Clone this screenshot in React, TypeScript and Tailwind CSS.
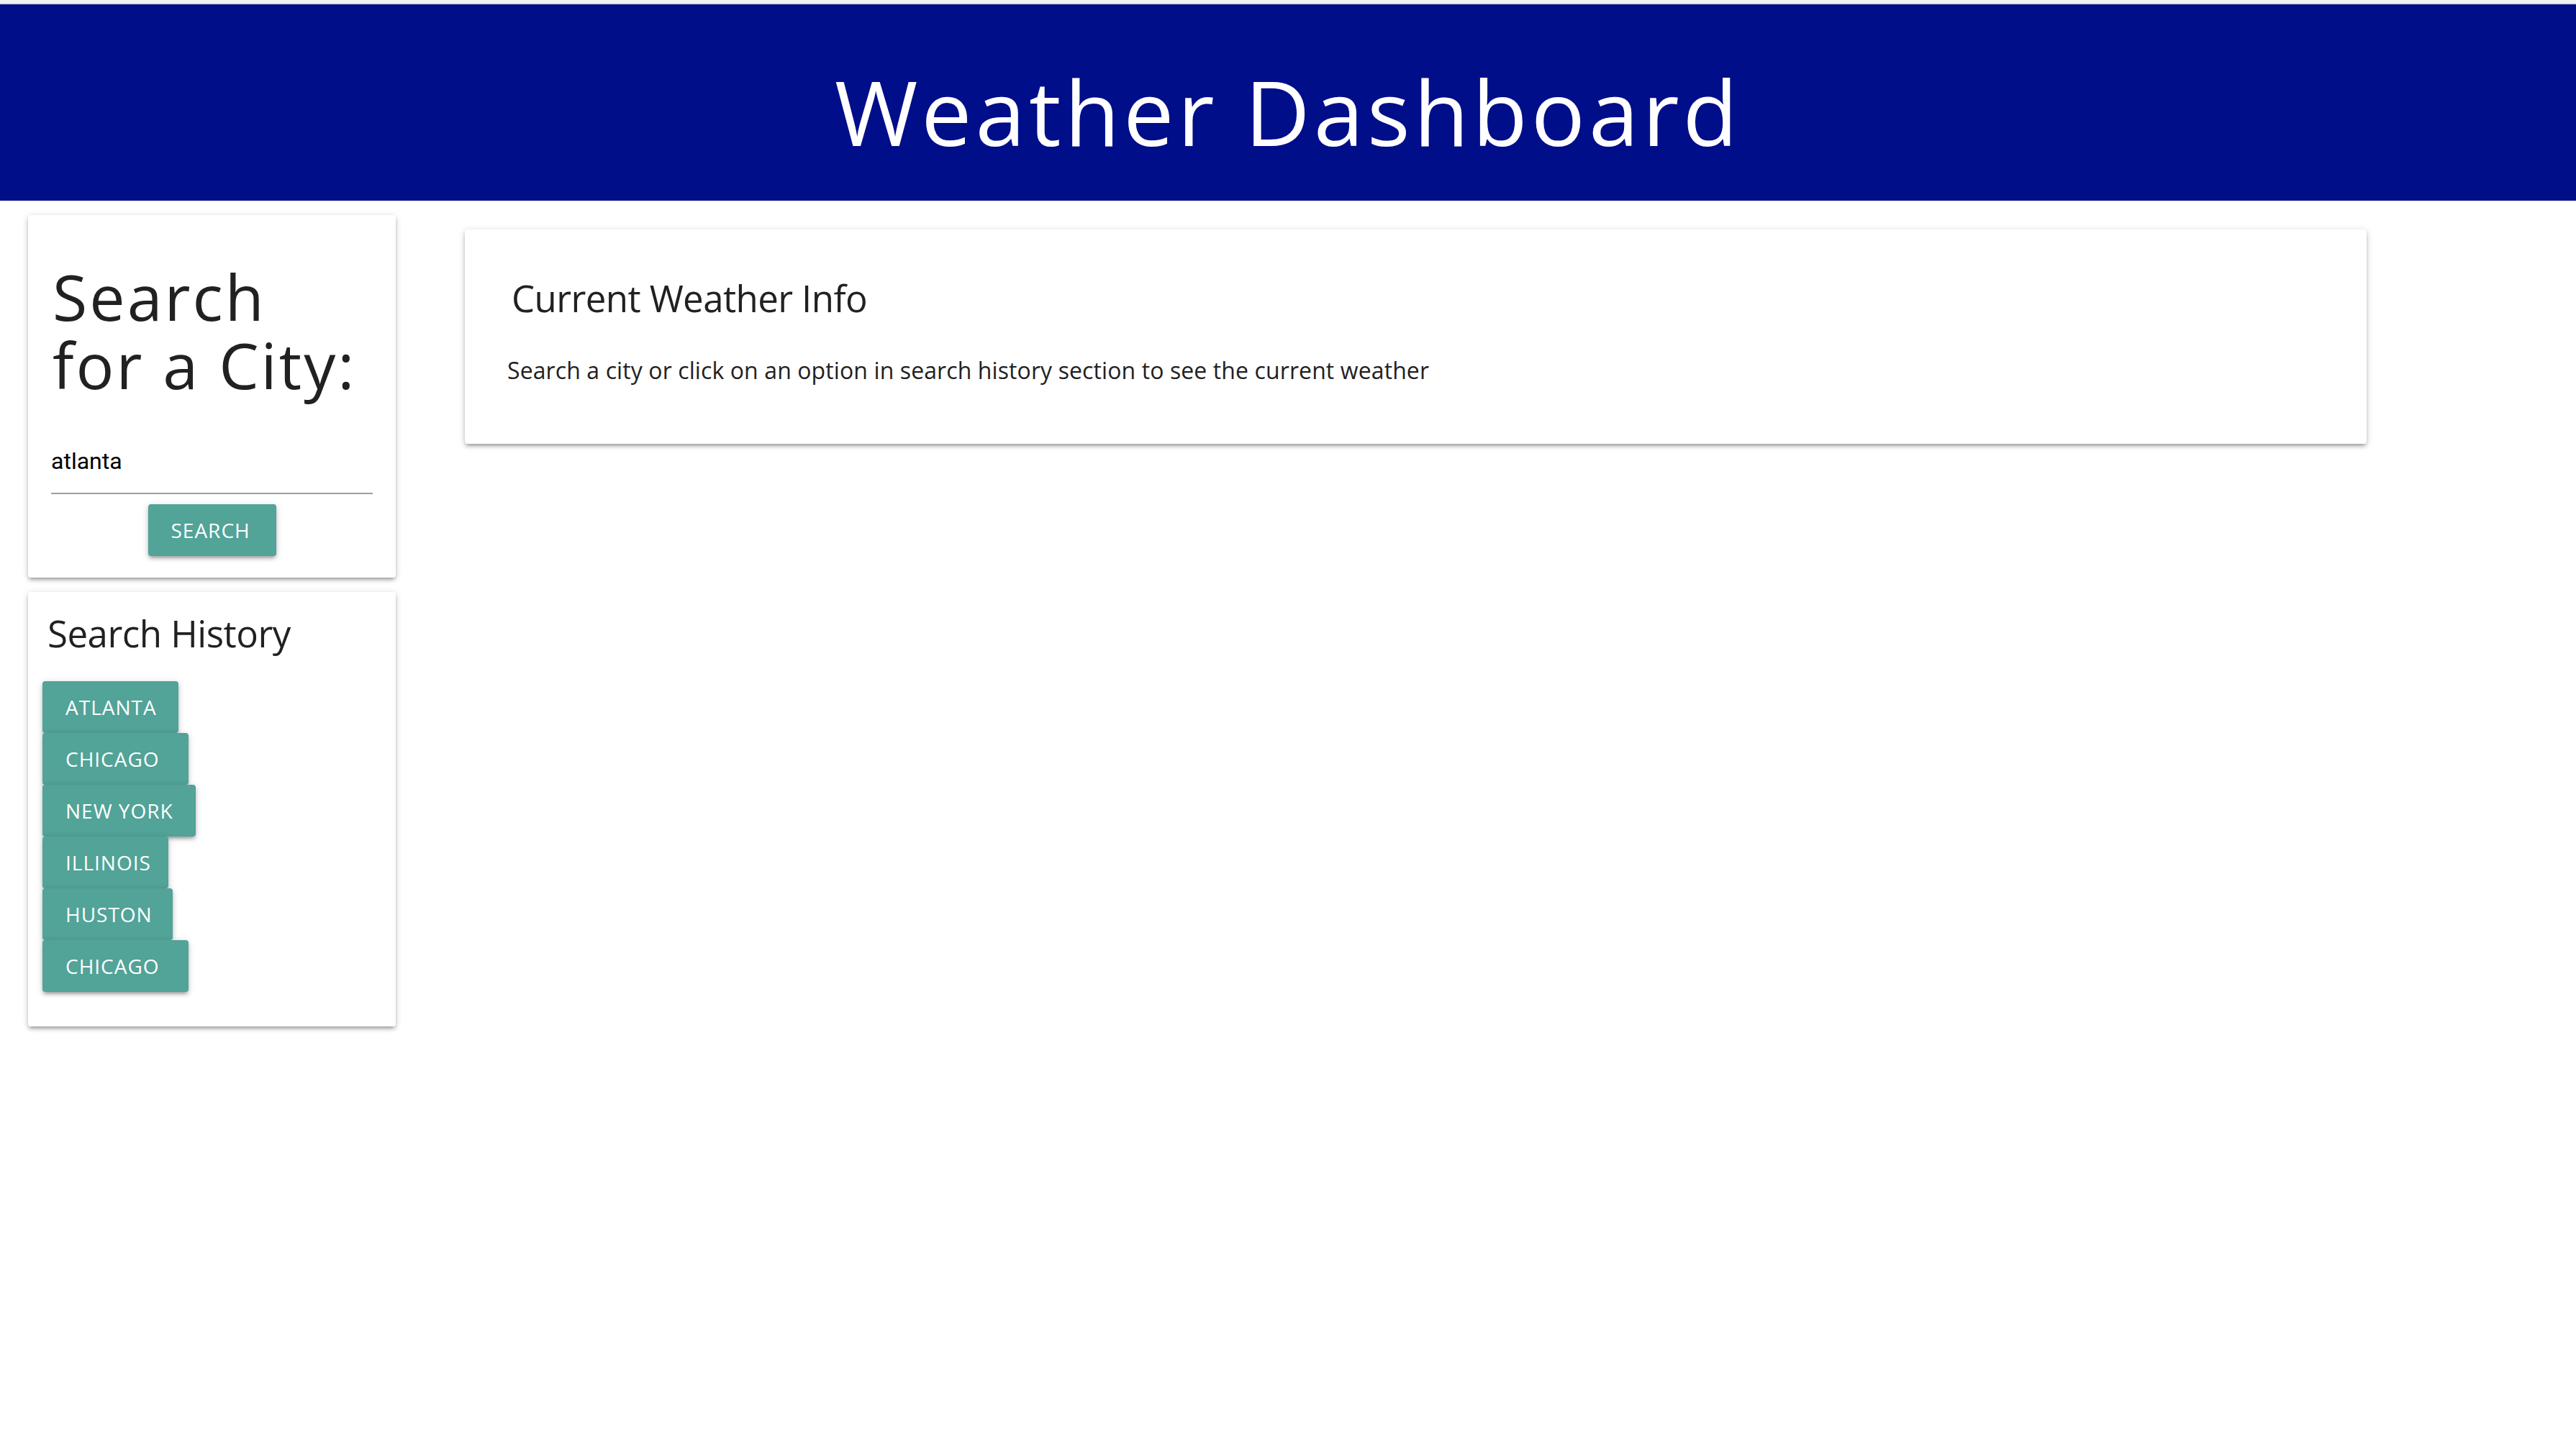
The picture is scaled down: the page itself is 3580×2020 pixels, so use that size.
import React from "react";

const history = [
  { name: "ATLANTA", w: "w-[189px]" },
  { name: "CHICAGO", w: "w-[203px]" },
  { name: "NEW YORK", w: "w-[213px]" },
  { name: "ILLINOIS", w: "w-[175px]" },
  { name: "HUSTON", w: "w-[181px]" },
  { name: "CHICAGO", w: "w-[203px]" },
];

const cardShadow =
  "shadow-[0_4px_4px_0_rgba(0,0,0,0.14),0_6px_2px_-4px_rgba(0,0,0,0.12),0_2px_10px_0_rgba(0,0,0,0.2)]";

export default function App() {
  return (
    <div className="min-h-screen bg-white font-['Open_Sans',sans-serif] text-[#212121]">
      <div className="h-[4px] bg-[#f3f3f3]" />
      <div className="h-[2px] bg-[#dcdcdc]" />
      <header className="h-[273px] bg-[#000e8a] pt-[86px] flex justify-center">
        <h1 className="text-white text-[125px] leading-none font-normal tracking-[5px]">
          Weather Dashboard
        </h1>
      </header>

      <main className="flex items-start pl-[39px] pt-[20px] gap-[96px]">
        <aside className="w-[511px] flex flex-col gap-[20px]">
          <div className={`bg-white rounded-[4px] ${cardShadow} pt-[66px] pb-[30px] pl-[34px] pr-[32px]`}>
            <h3 className="text-[88px] font-normal tracking-[3px]">
              <span className="block h-[95px] leading-[95px]">Search</span>
              <span className="block h-[95px] leading-[95px]">for a City:</span>
            </h3>
            <div className="mt-[36px]">
              <input
                type="text"
                defaultValue="atlanta"
                className="w-[447px] h-[96px] pt-[6px] border-0 border-b-2 border-[#9e9e9e] outline-none bg-transparent text-[32px] text-black font-['Roboto',sans-serif] -ml-[2px]"
              />
            </div>
            <div className="mt-[14px] flex justify-center -ml-[2px]">
              <button
                className={`w-[178px] h-[72px] pl-[32px] text-left rounded-[4px] bg-[#52a398] text-white text-[28px] font-medium tracking-[1px] ${cardShadow}`}
              >
                SEARCH
              </button>
            </div>
          </div>

          <div className={`bg-white rounded-[4px] ${cardShadow} pt-[32px] pb-[48px] pl-[20px]`}>
            <h5 className="text-[51px] leading-none font-normal pl-[7px] tracking-[-0.5px]">
              Search History
            </h5>
            <div className="mt-[41px] flex flex-col items-start">
              {history.map((h, i) => (
                <button
                  key={i}
                  className={`${h.w} h-[72px] pl-[32px] text-left rounded-[4px] bg-[#52a398] text-white text-[28px] font-medium tracking-[1px] ${cardShadow}`}
                >
                  {h.name}
                </button>
              ))}
            </div>
          </div>
        </aside>

        <section
          className={`w-[2643px] mt-[20px] bg-white rounded-[4px] ${cardShadow} pt-[70px] pb-[86px] pl-[59px]`}
        >
          <h5 className="text-[51px] leading-none font-normal pl-[6px] tracking-[-0.6px]">
            Current Weather Info
          </h5>
          <p className="mt-[59px] text-[32px] leading-[32px] tracking-[0.1px] text-[#212121]">
            Search a city or click on an option in search history section to see the current weather
          </p>
        </section>
      </main>
    </div>
  );
}
